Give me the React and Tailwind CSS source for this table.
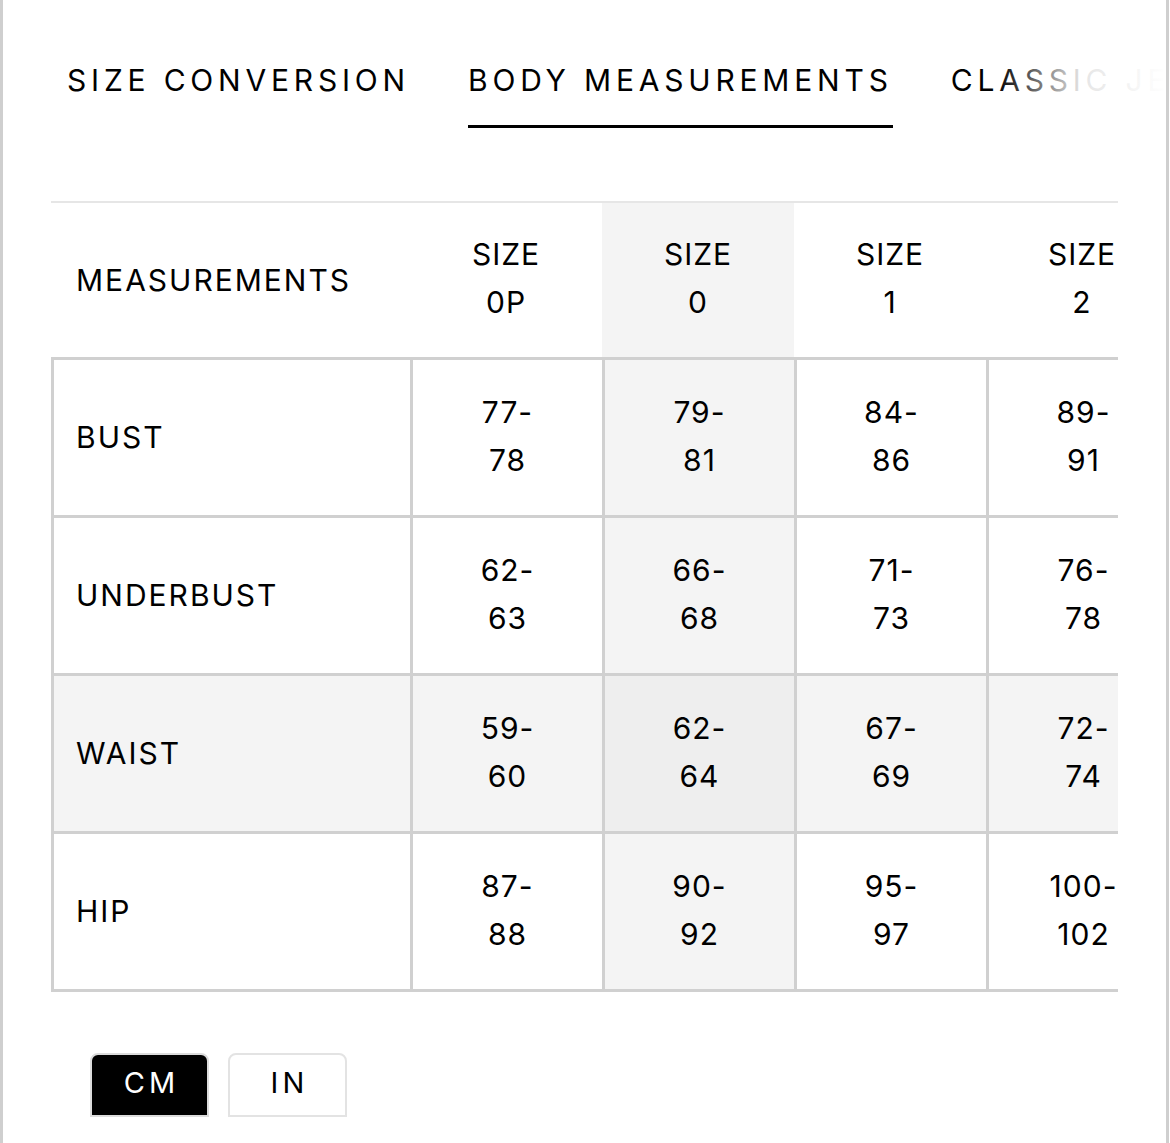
import React, { useState } from 'react';

const sizes = ['0P', '0', '1', '2'];

const rows = [
  { name: 'BUST', values: ['77-78', '79-81', '84-86', '89-91'] },
  { name: 'UNDERBUST', values: ['62-63', '66-68', '71-73', '76-78'] },
  { name: 'WAIST', values: ['59-60', '62-64', '67-69', '72-74'] },
  { name: 'HIP', values: ['87-88', '90-92', '95-97', '100-102'] },
];

const tabs = ['SIZE CONVERSION', 'BODY MEASUREMENTS', 'CLASSIC JEANS', 'STRETCH JEANS'];

function App() {
  const [activeTab, setActiveTab] = useState(1);
  const [unit, setUnit] = useState('cm');
  // column + row that are highlighted
  const activeCol = 1;
  const activeRow = 2;

  const cellBg = (r, c) => {
    if (r === activeRow && c === activeCol) return 'bg-[#eeeeee]';
    if (r === activeRow || c === activeCol) return 'bg-[#f4f4f4]';
    return 'bg-white';
  };

  return (
    <div className="w-[1169px] h-[1143px] bg-white border-x-[3px] border-[#cfcfcf] font-[Inter,sans-serif] text-black overflow-hidden">
      {/* Tabs */}
      <div className="relative pt-[62px] pl-[64px] overflow-hidden">
        <div className="flex gap-[58px] w-max">
          {tabs.map((t, i) => (
            <button
              key={t}
              onClick={() => setActiveTab(i)}
              className={
                'text-[30px] leading-[36px] tracking-[0.16em] whitespace-nowrap pb-[27px] border-b-[3px] ' +
                (activeTab === i ? 'border-black' : 'border-transparent')
              }
            >
              {t}
            </button>
          ))}
        </div>
        <div className="absolute top-0 right-0 h-full w-[170px] bg-gradient-to-r from-white/0 via-white/90 to-white pointer-events-none" />
      </div>

      {/* Table */}
      <div className="mx-[48px] mt-[73px] overflow-hidden">
        <div className="grid grid-cols-[359px_192px_192px_192px_192px] w-max border-t-2 border-[#e6e6e6] text-[30px] leading-[48px] tracking-[1px]">
          <div className="h-[157px] pl-[25px] flex items-center border-b-[3px] border-[#d0d0d0] tracking-[2px]">MEASUREMENTS</div>
          {sizes.map((s, c) => (
            <div
              key={s}
              className={
                'h-[157px] pb-[4px] flex flex-col items-center justify-center text-center border-b-[3px] border-[#d0d0d0] ' +
                (c === activeCol ? 'bg-[#f4f4f4]' : 'bg-white')
              }
            >
              <span>SIZE</span>
              <span>{s}</span>
            </div>
          ))}

          {rows.map((row, r) => (
            <React.Fragment key={row.name}>
              <div
                className={
                  'h-[158px] pl-[22px] pb-[2px] flex items-center border-l-[3px] border-b-[3px] border-[#d0d0d0] tracking-[2px] ' +
                  (r === activeRow ? 'bg-[#f4f4f4]' : 'bg-white')
                }
              >
                {row.name}
              </div>
              {row.values.map((v, c) => {
                const [a, b] = v.split('-');
                return (
                  <div
                    key={c}
                    className={
                      'h-[158px] pb-[4px] flex flex-col items-center justify-center text-center border-l-[3px] border-b-[3px] border-[#d0d0d0] ' +
                      cellBg(r, c)
                    }
                  >
                    <span>{a}-</span>
                    <span>{b}</span>
                  </div>
                );
              })}
            </React.Fragment>
          ))}
        </div>
      </div>

      {/* Units */}
      <div className="flex gap-[19px] ml-[87px] mt-[61px]">
        {['cm', 'in'].map((u) => (
          <button
            key={u}
            onClick={() => setUnit(u)}
            className={
              'w-[119px] h-[64px] border-2 rounded-t-[8px] text-[29px] tracking-[0.14em] pl-[4px] pb-[4px] uppercase ' +
              (unit === u ? 'bg-black text-white border-[#dcdcdc]' : 'bg-white text-black border-[#e3e3e3]')
            }
          >
            {u}
          </button>
        ))}
      </div>
    </div>
  );
}

export default App;
